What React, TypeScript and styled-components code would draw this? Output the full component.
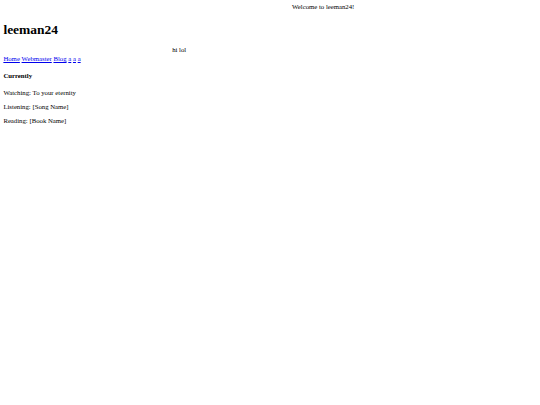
import styled, { createGlobalStyle } from "styled-components";

// the page is drawn at 1280px wide and shown at 540px
const k = 540 / 1280;
const px = (n: number) => `${(n * k).toFixed(3)}px`;

const GlobalStyle = createGlobalStyle`
  body {
    margin: ${px(8)};
    background: #ffffff;
    color: #000000;
    font-family: "Liberation Serif", "Times New Roman", serif;
    font-size: ${px(16)};
    line-height: ${px(18)};
  }
`;

const Ticker = styled.div<{ $offset: number; $height?: number }>`
  padding-left: ${({ $offset }) => px($offset)};
  height: ${({ $height }) => px($height ?? 18)};
  white-space: nowrap;
`;

const Title = styled.h1`
  font-size: ${px(32)};
  line-height: ${px(37)};
  margin: ${px(25)} 0 ${px(21)};
  font-weight: bold;
`;

const Nav = styled.nav`
  display: flex;
  gap: ${px(4)};
`;

const NavLink = styled.a`
  color: #0000ee;
  text-decoration: underline;
`;

const Heading = styled.h4`
  font-size: ${px(16)};
  margin: ${px(21)} 0 ${px(24)};
  font-weight: bold;
`;

const Line = styled.p`
  margin: ${px(16)} 0;
  line-height: ${px(17)};
`;

const links = ["Home", "Webmaster", "Blog", "a", "a", "a"];

const App = () => {
  return (
    <>
      <GlobalStyle />
      <Ticker $offset={684}>Welcome to leeman24!</Ticker>
      <Title>leeman24</Title>
      <Ticker $offset={400} $height={22}>
        hi lol
      </Ticker>
      <Nav>
        {links.map((l, i) => (
          <NavLink key={i} href="#">
            {l}
          </NavLink>
        ))}
      </Nav>
      <Heading>Currently</Heading>
      <Line>Watching: To your eternity</Line>
      <Line>Listening: [Song Name]</Line>
      <Line>Reading: [Book Name]</Line>
    </>
  );
};

export default App;
